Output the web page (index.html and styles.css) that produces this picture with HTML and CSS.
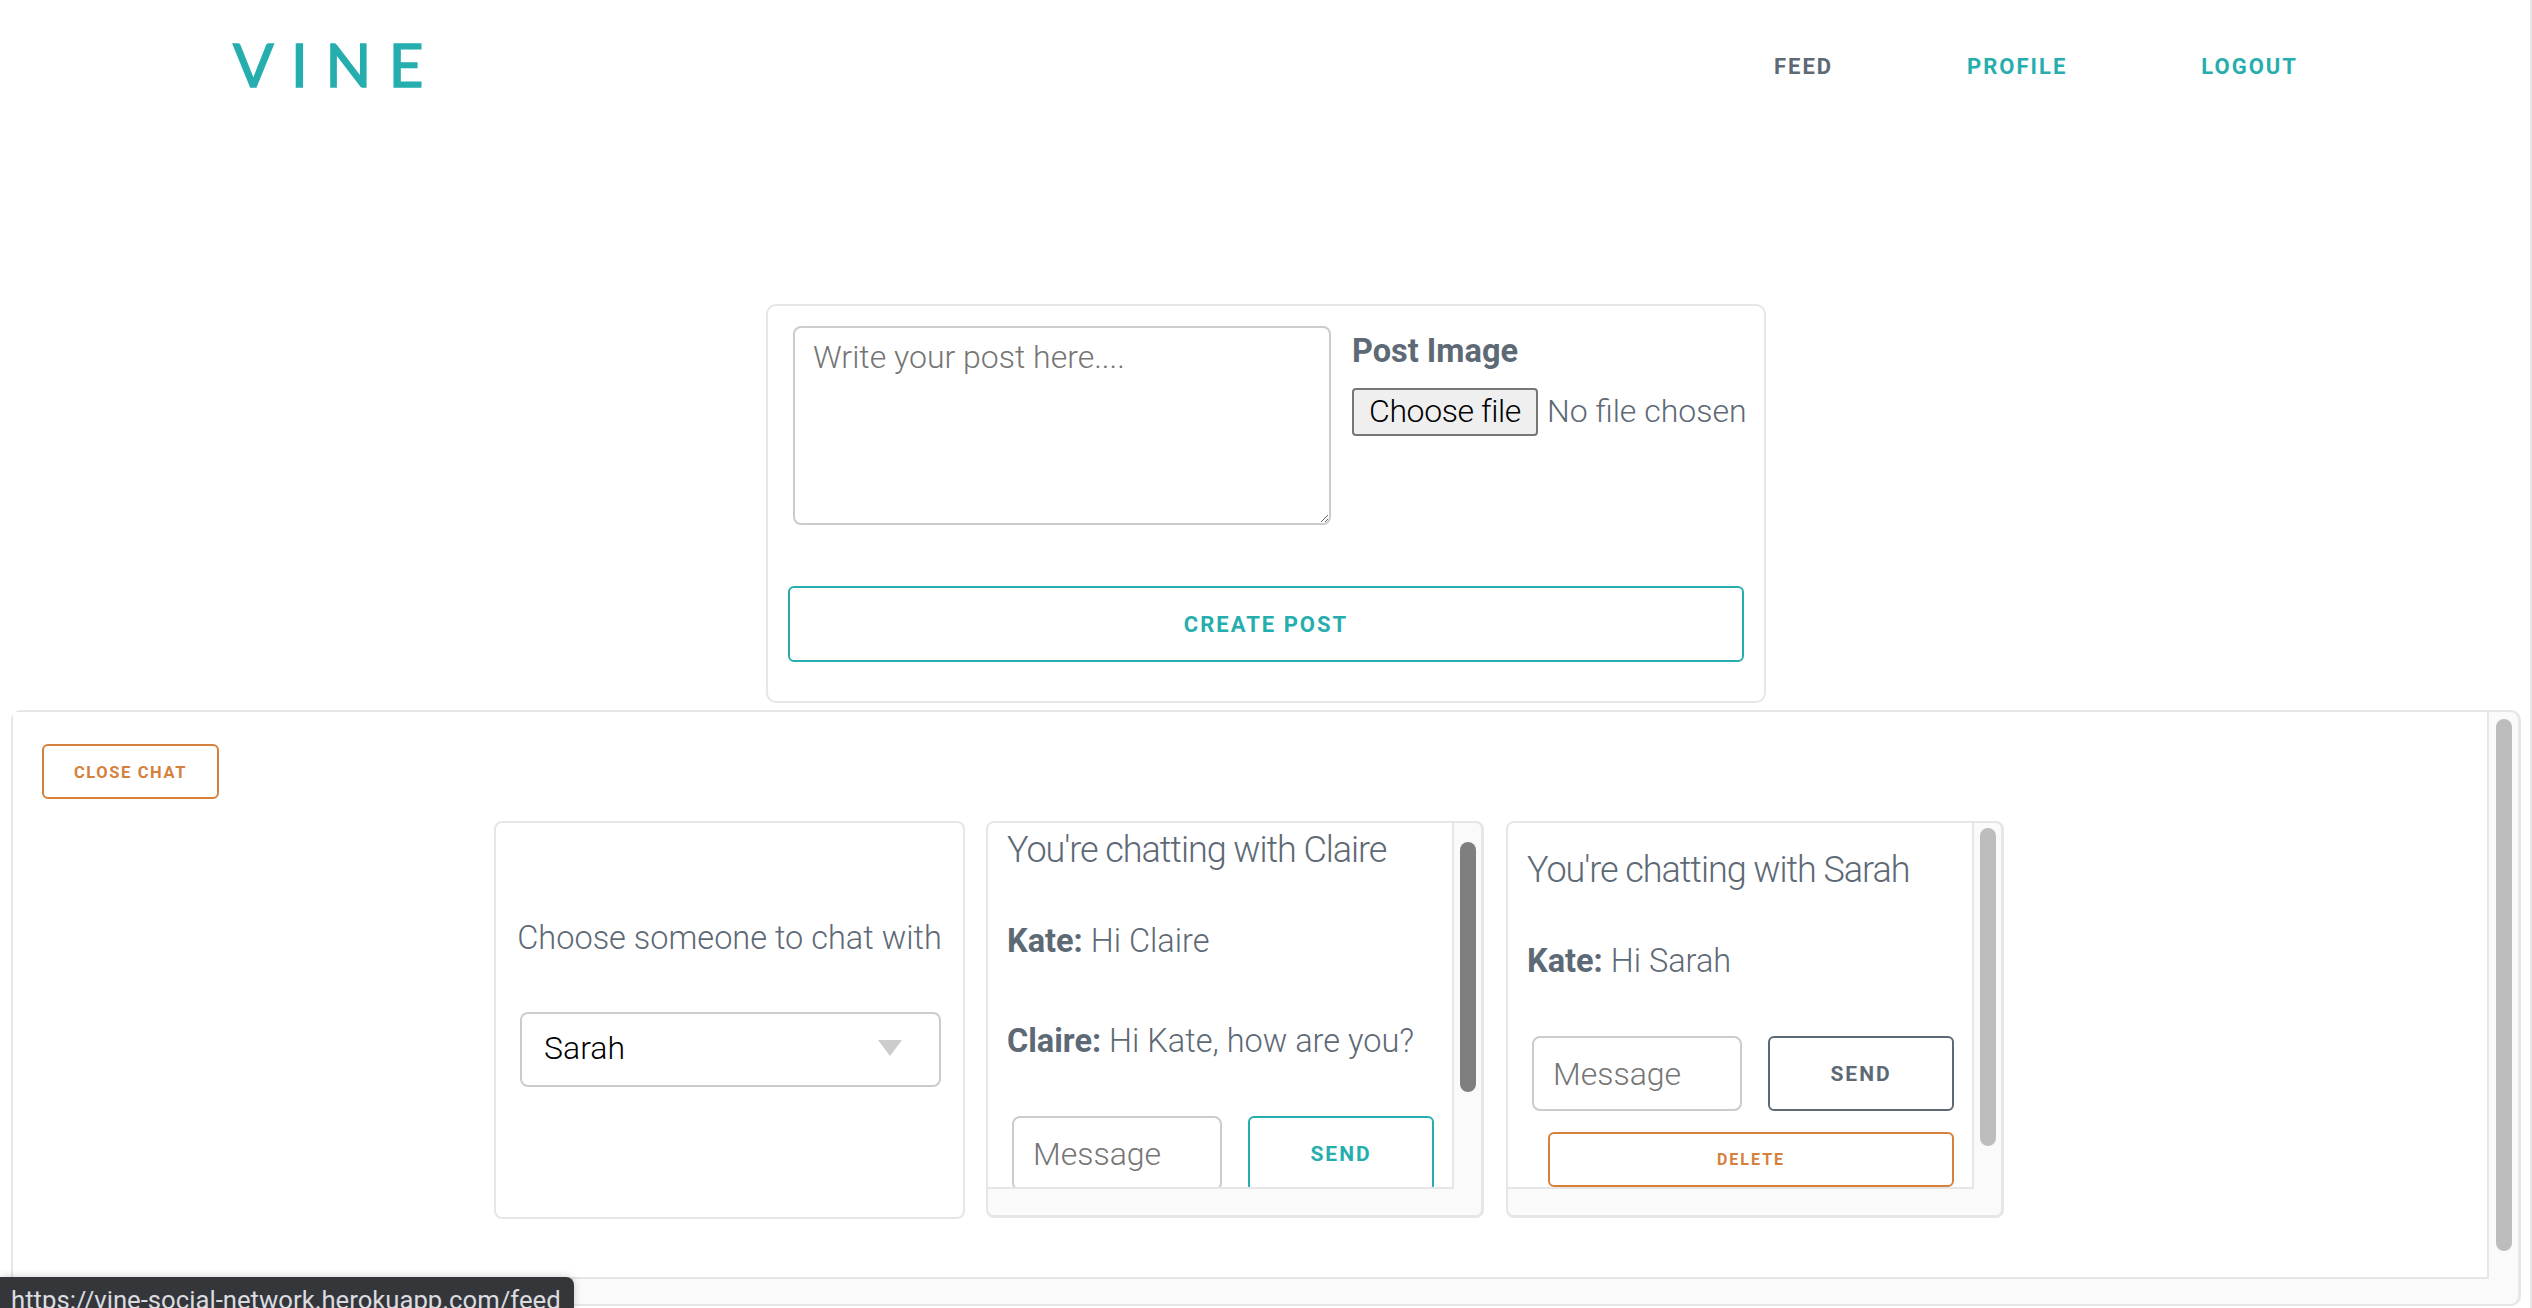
FILE: index.html
```html
<!DOCTYPE html>
<html lang="en">
<head>
    <meta charset="UTF-8">
    <meta name="viewport" content="width=device-width, initial-scale=1.0">
    <title>Vine</title>
    <link rel="stylesheet" href="styles.css">
</head>
<body>
    <header class="topbar">
        <a class="logo" href="#">VINE</a>
        <nav class="nav">
            <a class="nav-link nav-current" href="#">Feed</a>
            <a class="nav-link" href="#">Profile</a>
            <a class="nav-link" href="#">Logout</a>
        </nav>
    </header>

    <form class="post-card">
        <div class="post-row">
            <textarea class="post-text" placeholder="Write your post here...."></textarea>
            <div class="post-image">
                <div class="post-label">Post Image</div>
                <div class="file-row">
                    <button class="file-btn" type="button">Choose file</button>
                    <span class="file-name">No file chosen</span>
                </div>
            </div>
        </div>
        <button class="btn btn-teal btn-create" type="button">Create Post</button>
    </form>

    <section class="chat-panel">
        <div class="chat-content">
            <button class="btn btn-orange btn-close" type="button">Close Chat</button>
            <div class="chat-row">
                <div class="chooser">
                    <p class="chooser-title">Choose someone to chat with</p>
                    <div class="fake-select">
                        <span>Sarah</span>
                        <span class="select-arrow"></span>
                    </div>
                </div>

                <div class="chat-box">
                    <div class="chat-body chat-body-scrolled">
                        <h3 class="chat-title">You're chatting with Claire</h3>
                        <p class="chat-msg"><b>Kate:</b> Hi Claire</p>
                        <p class="chat-msg"><b>Claire:</b> Hi Kate, how are you?</p>
                        <div class="chat-form">
                            <input class="chat-input" type="text" placeholder="Message">
                            <button class="btn btn-teal btn-send" type="button">Send</button>
                        </div>
                    </div>
                    <div class="vbar vbar-claire"><div class="thumb thumb-dark"></div></div>
                    <div class="hbar"></div>
                </div>

                <div class="chat-box">
                    <div class="chat-body">
                        <h3 class="chat-title">You're chatting with Sarah</h3>
                        <p class="chat-msg"><b>Kate:</b> Hi Sarah</p>
                        <div class="chat-form">
                            <input class="chat-input" type="text" placeholder="Message">
                            <button class="btn btn-grey btn-send" type="button">Send</button>
                        </div>
                        <button class="btn btn-orange btn-delete" type="button">Delete</button>
                    </div>
                    <div class="vbar vbar-sarah"><div class="thumb"></div></div>
                    <div class="hbar"></div>
                </div>
            </div>
        </div>
        <div class="vbar vbar-panel"><div class="thumb"></div></div>
        <div class="hbar"></div>
    </section>

    <div class="status-bar">https://vine-social-network.herokuapp.com/feed</div>
</body>
</html>
```

FILE: styles.css
```css
* {
    box-sizing: border-box;
}
html, body {
    height: 100%;
}
body {
    font-family: 'Roboto', sans-serif;
    font-weight: 300;
    color: #5d6975;
    background-color: #fff;
    margin: 0;
    overflow: hidden;
    box-shadow: inset -2px 0 0 #e8e8e8;
}

/* header */
.topbar {
    height: 304px;
    padding: 36px 234px 0 233px;
    display: flex;
    justify-content: space-between;
    align-items: flex-start;
}
.logo {
    font-family: 'Lato', sans-serif;
    font-weight: 400;
    font-size: 60px;
    line-height: 56px;
    letter-spacing: 17.5px;
    color: #26aeae;
    -webkit-text-stroke: 1.5px #26aeae;
    text-decoration: none;
}
.nav {
    display: flex;
    gap: 134px;
    padding-top: 16px;
}
.nav-link {
    font-size: 22px;
    font-weight: 700;
    line-height: 30px;
    letter-spacing: 2px;
    text-transform: uppercase;
    text-decoration: none;
    color: #26aeae;
}
.nav-current {
    color: #5d6975;
}

/* buttons */
.btn {
    font-family: 'Roboto', sans-serif;
    font-weight: 700;
    text-transform: uppercase;
    background: #fff;
    border-radius: 6px;
    border: 2px solid;
    padding: 0;
}
.btn-teal {
    color: #26aeae;
    border-color: #26aeae;
}
.btn-orange {
    color: #d5813c;
    border-color: #d5813c;
}
.btn-grey {
    color: #5d6975;
    border-color: #5d6975;
}

/* new post */
.post-card {
    width: 1000px;
    height: 399px;
    margin: 0 auto;
    padding: 20px 21px 0 20px;
    border: 2px solid #e6e6e6;
    border-radius: 10px;
}
.post-row {
    display: flex;
    gap: 21px;
    padding-left: 5px;
}
.post-text {
    flex: none;
    width: 538px;
    height: 199px;
    padding: 10px 18px;
    border: 2px solid #ccc;
    border-radius: 8px;
    font-family: 'Roboto', sans-serif;
    font-weight: 300;
    font-size: 32px;
}
.post-text::placeholder, .chat-input::placeholder {
    color: #757575;
    opacity: 1;
}
.post-image {
    padding-top: 7px;
}
.post-label {
    font-size: 32.5px;
    font-weight: 700;
    line-height: 36px;
    margin-bottom: 19px;
}
.file-row {
    display: flex;
    align-items: center;
    gap: 9px;
    font-size: 32px;
    white-space: nowrap;
}
.file-name {
    padding-bottom: 2px;
}
.file-btn {
    width: 186px;
    height: 48px;
    padding: 0 0 2px;
    font-family: 'Roboto', sans-serif;
    font-weight: 300;
    font-size: 32px;
    letter-spacing: -0.4px;
    color: #000;
    background: #efefef;
    border: 2px solid #767676;
    border-radius: 4px;
}
.btn-create {
    display: block;
    width: 956px;
    height: 76px;
    margin-top: 61px;
    font-size: 22px;
    letter-spacing: 2px;
}

/* chat */
.chat-panel {
    height: 596px;
    margin: 7px 11px 0;
    display: grid;
    grid-template-columns: 1fr 29px;
    grid-template-rows: 1fr 25px;
    border: 2px solid #e6e6e6;
    border-right-width: 3px;
    border-radius: 10px;
    background: #fafafa;
}
.chat-content {
    background: #fff;
    border-right: 2px solid #e6e6e6;
    border-bottom: 2px solid #e6e6e6;
    padding: 32px 29px 0;
    overflow: hidden;
}
.btn-close {
    display: block;
    width: 177px;
    height: 55px;
    padding-top: 2px;
    font-size: 16.5px;
    letter-spacing: 1.6px;
}
.chat-row {
    display: flex;
    gap: 21px;
    margin: 22px 0 0 452px;
}
.chooser {
    flex: none;
    width: 471px;
    height: 398px;
    padding: 95px 22px 0 24px;
    text-align: center;
    border: 2px solid #e6e6e6;
    border-radius: 8px;
}
.chooser-title {
    margin: 0 -4px 54px -6px;
    font-size: 32.5px;
    line-height: 40px;
    white-space: nowrap;
}
.fake-select {
    height: 75px;
    padding: 0 37px 3px 22px;
    display: flex;
    justify-content: space-between;
    align-items: center;
    border: 2px solid #ccc;
    border-radius: 8px;
    color: #000;
    font-size: 32px;
}
.select-arrow {
    width: 0;
    height: 0;
    border-left: 12px solid transparent;
    border-right: 12px solid transparent;
    border-top: 16px solid #ccc;
}
.chat-box {
    flex: none;
    width: 498px;
    height: 397px;
    display: grid;
    grid-template-columns: 1fr 27px;
    grid-template-rows: 366px 1fr;
    border: 2px solid #e6e6e6;
    border-right-width: 3px;
    border-bottom-width: 3px;
    border-radius: 8px;
    background: #fafafa;
    overflow: hidden;
}
.chat-box + .chat-box {
    margin-left: 1px;
}
.chat-body {
    padding: 27px 16px 0 19px;
    background: #fff;
    border-right: 2px solid #e6e6e6;
    border-bottom: 2px solid #e6e6e6;
    overflow: hidden;
}
.chat-body-scrolled {
    padding-top: 7px;
}
.chat-title {
    margin: 0;
    font-size: 36px;
    font-weight: 300;
    letter-spacing: -1.05px;
    line-height: 40px;
}
.chat-msg {
    margin: 51px 0 0;
    font-size: 32.5px;
    line-height: 40px;
    white-space: nowrap;
}
.chat-msg b {
    font-weight: 700;
}
.chat-msg + .chat-msg {
    margin-top: 60px;
}
.chat-form {
    display: flex;
    gap: 26px;
    margin: 55px 0 0 5px;
}
.chat-input {
    width: 210px;
    height: 75px;
    padding: 0 19px;
    border: 2px solid #ccc;
    border-radius: 8px;
    font-family: 'Roboto', sans-serif;
    font-weight: 300;
    font-size: 32px;
    flex: none;
}
.btn-send {
    width: 186px;
    height: 75px;
    flex: none;
    font-size: 21px;
    letter-spacing: 2px;
}
.btn-delete {
    display: block;
    width: 406px;
    height: 55px;
    margin: 21px 0 0 21px;
    font-size: 16px;
    letter-spacing: 2px;
}
.vbar {
    padding: 0 6px;
}
.vbar-panel {
    padding: 7px 6px 0 7px;
}
.vbar-claire {
    padding-top: 19px;
}
.vbar-sarah {
    padding-top: 5px;
}
.thumb {
    width: 16px;
    border-radius: 8px;
    background: #bdbdbd;
}
.vbar-panel .thumb {
    height: 532px;
}
.vbar-claire .thumb {
    height: 250px;
}
.vbar-sarah .thumb {
    height: 318px;
}
.thumb-dark {
    background: #7f7f7f;
}
.hbar {
    grid-column: 1 / 3;
}

/* link preview at the bottom of the window */
.status-bar {
    position: absolute;
    left: 0;
    bottom: 0;
    width: 574px;
    height: 31px;
    padding: 8px 0 0 11px;
    background: #35363a;
    color: #dadce0;
    border-top-right-radius: 8px;
    font-size: 25.7px;
    font-weight: 400;
    line-height: 30px;
    white-space: nowrap;
    overflow: hidden;
    box-shadow: 0 0 8px rgba(0, 0, 0, 0.2);
}
```
